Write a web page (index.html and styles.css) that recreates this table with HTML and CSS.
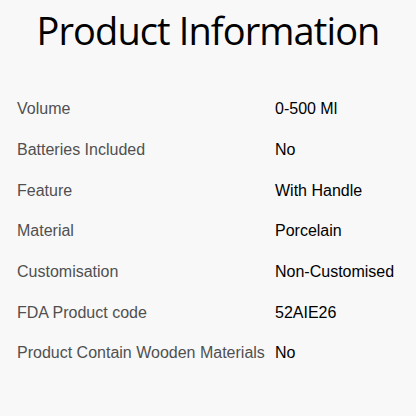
FILE: index.html
```html
<!DOCTYPE html>
<html lang="en">
<head>
    <meta charset="UTF-8">
    <meta name="viewport" content="width=device-width, initial-scale=1.0">
    <title>Product Information</title>
    <link rel="stylesheet" href="styles.css">
</head>
<body>
    <div class="page">
        <h1 class="title">Product Information</h1>
        <div class="spec-table">
            <div class="spec-label">Volume</div>
            <div class="spec-value">0-500 Ml</div>
            <div class="spec-label">Batteries Included</div>
            <div class="spec-value">No</div>
            <div class="spec-label">Feature</div>
            <div class="spec-value">With Handle</div>
            <div class="spec-label">Material</div>
            <div class="spec-value">Porcelain</div>
            <div class="spec-label">Customisation</div>
            <div class="spec-value">Non-Customised</div>
            <div class="spec-label">FDA Product code</div>
            <div class="spec-value">52AIE26</div>
            <div class="spec-label">Product Contain Wooden Materials</div>
            <div class="spec-value">No</div>
        </div>
    </div>
</body>
</html>
```
FILE: styles.css
```css
* {
    margin: 0;
    padding: 0;
    box-sizing: border-box;
}
body {
    background: #f8f8f8;
    height: 100vh;
    overflow: hidden;
}
.page {
    width: 416px;
    height: 416px;
}
.title {
    font-family: "Open Sans", "Noto Sans", sans-serif;
    font-weight: 400;
    font-size: 38px;
    line-height: 48px;
    color: #000;
    text-align: center;
    padding-top: 6px;
    letter-spacing: -0.9px;
}
.spec-table {
    display: grid;
    grid-template-columns: 258px 1fr;
    grid-auto-rows: 40.67px;
    align-items: center;
    padding-left: 17px;
    margin-top: 35px;
    font-family: "Liberation Sans", Arial, sans-serif;
    font-size: 16px;
}
.spec-label {
    color: #505050;
    white-space: nowrap;
}
.spec-value {
    color: #000;
    white-space: nowrap;
}
```
